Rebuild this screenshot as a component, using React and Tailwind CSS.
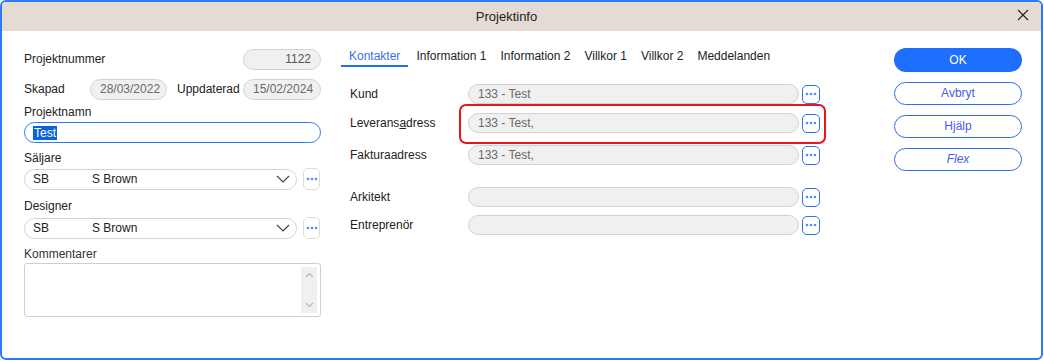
import React from 'react'

const font = { fontFamily: '"Liberation Sans", Arial, sans-serif' }

function Dots({ blue = true }) {
  return (
    <button
      className={`flex items-center justify-center rounded-[5px] border bg-white ${
        blue ? 'h-[19px] w-[18px] border-[#2f6ff0]' : 'h-[22px] w-[17px] border-[#e3d9d3]'
      }`}
    >
      <svg width="12" height="4" viewBox="0 0 12 4">
        <circle cx="2" cy="2" r="1.3" fill="#4f8ff0" />
        <circle cx="6" cy="2" r="1.3" fill="#4f8ff0" />
        <circle cx="10" cy="2" r="1.3" fill="#4f8ff0" />
      </svg>
    </button>
  )
}

function Field({ value, className = '', align = 'left' }) {
  return (
    <div
      className={`flex items-center rounded-full border border-[#d2d2d2] bg-[#f0f0f0] px-[9px] text-[12px] text-[#6a6a6a] ${
        align === 'right' ? 'justify-end' : ''
      } ${className}`}
    >
      {value}
    </div>
  )
}

function Select({ code, name }) {
  return (
    <div className="flex items-center gap-[6px]">
      <div className="flex h-[21px] w-[273px] items-center rounded-full border border-[#d2d2d2] bg-white pl-[8px] pr-[6px] text-[12px] text-[#222]">
        <span className="w-[59px]">{code}</span>
        <span className="flex-1">{name}</span>
        <svg width="14" height="8" viewBox="0 0 14 8">
          <path d="M1 1l6 6 6-6" fill="none" stroke="#444" strokeWidth="1.2" />
        </svg>
      </div>
      <Dots blue={false} />
    </div>
  )
}

function ContactRow({ label, value }) {
  return (
    <div className="flex items-center">
      <div className="w-[118px] text-[12px] text-[#222]">{label}</div>
      <Field value={value} className="h-[20px] w-[331px]" />
      <div className="ml-[3px] flex">
        <Dots />
      </div>
    </div>
  )
}

export default function App() {
  const tabs = ['Information 1', 'Information 2', 'Villkor 1', 'Villkor 2', 'Meddelanden']
  return (
    <div style={font} className="h-[361px] w-[1044px] bg-white leading-[15px]">
      <div className="flex h-[360px] w-[1043px] flex-col overflow-hidden rounded-[6px] border-2 border-[#2b7af5]">
        <div className="relative flex h-[29px] shrink-0 items-center justify-center bg-[#e5dbd5] pr-[30px] text-[13px] text-[#222]">
          Projektinfo
          <svg className="absolute right-[12px] top-[7px]" width="12" height="12" viewBox="0 0 12 12">
            <path d="M1 1l10 10M11 1L1 11" stroke="#222" strokeWidth="1.1" />
          </svg>
        </div>

        <div className="flex flex-1 pt-[17px]">
          {/* left column */}
          <div className="ml-[22px] flex w-[297px] flex-col pt-[1px] text-[12px] text-[#222]">
            <div className="flex items-center justify-between">
              <span>Projektnummer</span>
              <Field value="1122" align="right" className="h-[21px] w-[78px] text-[#555]" />
            </div>
            <div className="mt-[9px] flex items-center">
              <span className="w-[66px]">Skapad</span>
              <Field value="28/03/2022" className="h-[21px] w-[77px] px-[8px]" />
              <span className="ml-[10px] w-[66px]">Uppdaterad</span>
              <Field value="15/02/2024" className="h-[21px] w-[78px] px-[7px]" />
            </div>
            <div className="mt-[5px]">Projektnamn</div>
            <div className="mt-[2px] flex h-[21px] items-center rounded-full border border-[#2b7af5] bg-white px-[8px]">
              <span className="bg-[#0a64d6] px-px leading-[14px] text-white">Test</span>
            </div>
            <div className="mt-[8px]">Säljare</div>
            <div className="mt-[2px]">
              <Select code="SB" name="S Brown" />
            </div>
            <div className="mt-[9px]">Designer</div>
            <div className="mt-[3px]">
              <Select code="SB" name="S Brown" />
            </div>
            <div className="mt-[8px] text-[#333]">Kommentarer</div>
            <div className="mt-[1px] flex h-[54px] justify-end rounded-[3px] border border-[#cfcfcf] bg-white p-[3px]">
              <div className="flex w-[16px] flex-col items-center justify-between bg-[#f0f0f0] py-[5px]">
                <svg width="9" height="6" viewBox="0 0 9 6">
                  <path d="M1 5l3.5-3.5L8 5" fill="none" stroke="#b8b8b8" strokeWidth="1.2" />
                </svg>
                <svg width="9" height="6" viewBox="0 0 9 6">
                  <path d="M1 1l3.5 3.5L8 1" fill="none" stroke="#b8b8b8" strokeWidth="1.2" />
                </svg>
              </div>
            </div>
          </div>

          {/* middle column */}
          <div className="ml-[20px] flex w-[500px] flex-col pt-[1px]">
            <div className="flex items-end text-[12px] text-[#222]">
              <div className="border-b-2 border-[#1f6fff] px-[8px] pb-[1px] text-[#3d6cf0]">Kontakter</div>
              <div className="ml-[8px] flex gap-[14px] pb-[3px]">
                {tabs.map((t) => (
                  <div key={t}>{t}</div>
                ))}
              </div>
            </div>
            <div className="ml-[9px] mt-[17px] flex flex-col">
              <ContactRow label="Kund" value="133 - Test" />
              <div className="relative mt-[9px]">
                <div className="pointer-events-none absolute left-[109px] top-[-9px] h-[40px] w-[367px] rounded-[7px] border-2 border-[#e8141c]" />
                <ContactRow
                  label={
                    <span>
                      Leverans<span className="underline">a</span>dress
                    </span>
                  }
                  value="133 - Test,"
                />
              </div>
              <div className="mt-[12px]">
                <ContactRow label="Fakturaadress" value="133 - Test," />
              </div>
              <div className="mt-[22px]">
                <ContactRow label="Arkitekt" value="" />
              </div>
              <div className="mt-[8px]">
                <ContactRow label="Entreprenör" value="" />
              </div>
            </div>
          </div>

          {/* right column */}
          <div className="ml-[53px] flex w-[128px] flex-col gap-[10px] text-[12px]">
            <button className="h-[24px] rounded-full bg-[#1f6fff] text-white">OK</button>
            <button className="h-[23px] rounded-full border border-[#2b6ff0] bg-white text-[#4b5be8]">Avbryt</button>
            <button className="h-[23px] rounded-full border border-[#2b6ff0] bg-white text-[#4b5be8]">Hjälp</button>
            <button className="h-[23px] rounded-full border border-[#2b6ff0] bg-white italic text-[#4b5be8]">Flex</button>
          </div>
        </div>
      </div>
    </div>
  )
}
